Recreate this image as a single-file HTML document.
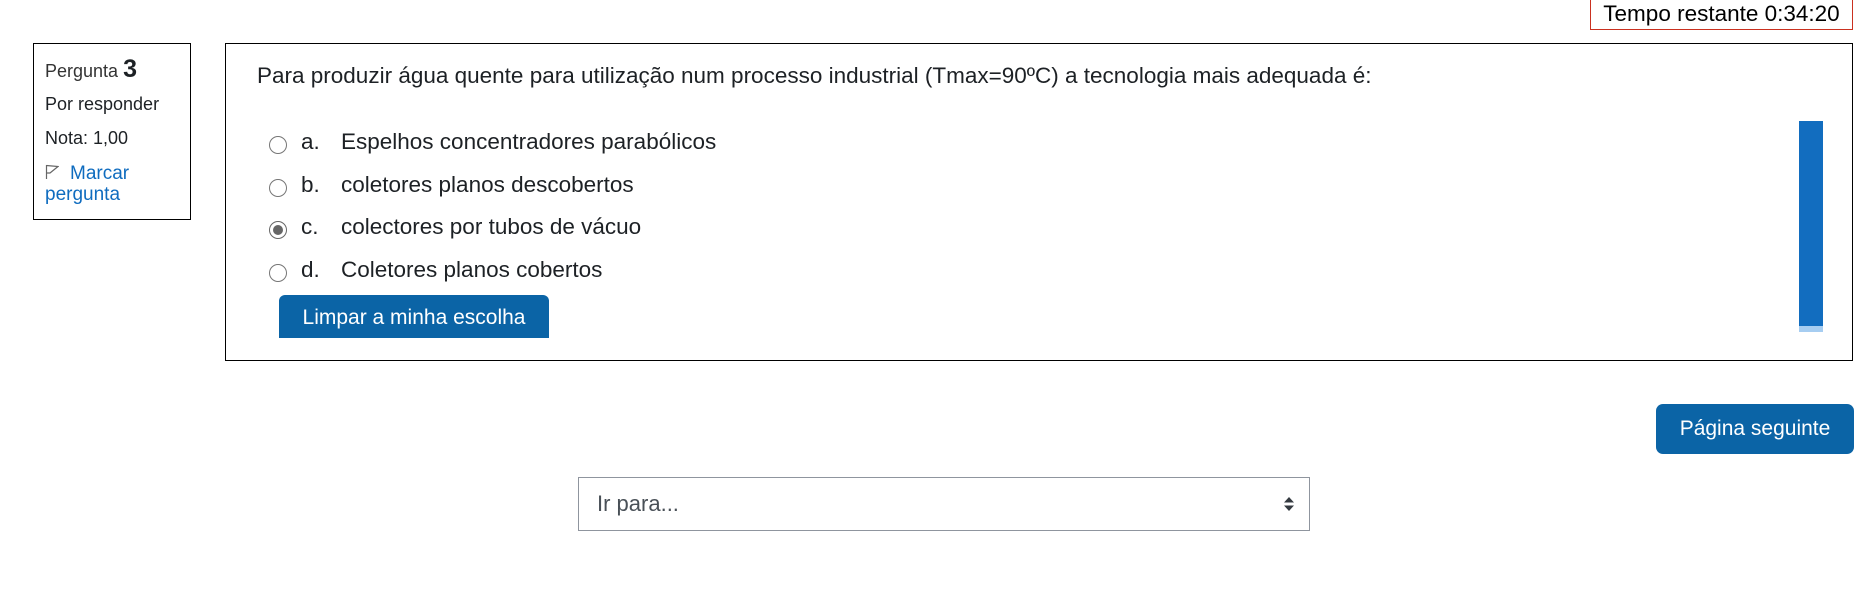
<!DOCTYPE html>
<html><head><meta charset="utf-8"><style>
*{margin:0;padding:0;box-sizing:border-box}
body{width:1876px;height:613px;background:#fff;font-family:"Liberation Sans",Arial,sans-serif;color:#1d2125;position:relative;overflow:hidden}
.abs{position:absolute}
#timer{left:1590px;top:-2px;width:263px;height:32px;border:1px solid #ca3120;font-size:22.5px;line-height:30px;text-align:center;color:#000}
#side{left:33px;top:43px;width:158px;height:177px;border:1px solid #000}
#side div{position:absolute;left:11px;white-space:nowrap}
#q{left:225px;top:43px;width:1628px;height:318px;border:1px solid #000}
.opt{position:absolute;font-size:22.5px;white-space:nowrap;color:#1d2125}
.radio{position:absolute;width:18px;height:18px;border:1px solid #767676;border-radius:50%;background:#fff}
.btn{position:absolute;background:#0b64a6;color:#fff}
</style></head><body>
<div id="timer" class="abs">Tempo restante 0:34:20</div>
<div id="side" class="abs">
 <div style="top:11px;font-size:18px;color:#333">Pergunta <b style="font-size:25px;color:#1d2125">3</b></div>
 <div style="top:50px;font-size:18px">Por responder</div>
 <div style="top:84px;font-size:18px">Nota: 1,00</div>
 <div style="top:119px;font-size:19px;color:#0f6cbf;line-height:21px"><svg width="14" height="15" viewBox="0 0 14 15" style="vertical-align:0;margin-right:11px"><path d="M1.5 1V15M1.5 1.5L13 2.5L5 9L1.5 9" fill="none" stroke="#666" stroke-width="1.2"/></svg>Marcar<br>pergunta</div>
</div>
<div id="q" class="abs">
 <div class="opt" style="left:31px;top:19px">Para produzir água quente para utilização num processo industrial (Tmax=90ºC) a tecnologia mais adequada é:</div>
 <div class="radio" style="left:43px;top:92px"></div>
 <div class="opt" style="left:75px;top:85px">a.</div><div class="opt" style="left:115px;top:85px">Espelhos concentradores parabólicos</div>
 <div class="radio" style="left:43px;top:135px"></div>
 <div class="opt" style="left:75px;top:128px">b.</div><div class="opt" style="left:115px;top:128px">coletores planos descobertos</div>
 <div class="radio" style="left:43px;top:177px;border-color:#666"><div style="position:absolute;left:3px;top:3px;width:10px;height:10px;border-radius:50%;background:#666"></div></div>
 <div class="opt" style="left:75px;top:170px">c.</div><div class="opt" style="left:115px;top:170px">colectores por tubos de vácuo</div>
 <div class="radio" style="left:43px;top:220px"></div>
 <div class="opt" style="left:75px;top:213px">d.</div><div class="opt" style="left:115px;top:213px">Coletores planos cobertos</div>
 <div class="btn" style="left:53px;top:251px;width:270px;height:43px;border-radius:6px 6px 0 0;font-size:21px;line-height:46px;text-align:center">Limpar a minha escolha</div>
 <div style="position:absolute;left:1573px;top:77px;width:24px;height:211px;background:#126dbf"></div>
 <div style="position:absolute;left:1573px;top:282px;width:24px;height:6px;background:#a6cdf1"></div>
</div>
<div class="btn abs" style="left:1656px;top:404px;width:198px;height:50px;border-radius:7px;font-size:21px;line-height:50px;text-align:center">Página seguinte</div>
<div class="abs" style="left:578px;top:477px;width:732px;height:54px;border:1px solid #8f959e;font-size:22px;line-height:52px;padding-left:18px;color:#495057">Ir para...
 <svg width="12" height="16" viewBox="0 0 12 16" style="position:absolute;right:14px;top:18px"><path d="M1 6.5L6 1L11 6.5Z M1 9.5L6 15L11 9.5Z" fill="#343a40"/></svg>
</div>
</body></html>
